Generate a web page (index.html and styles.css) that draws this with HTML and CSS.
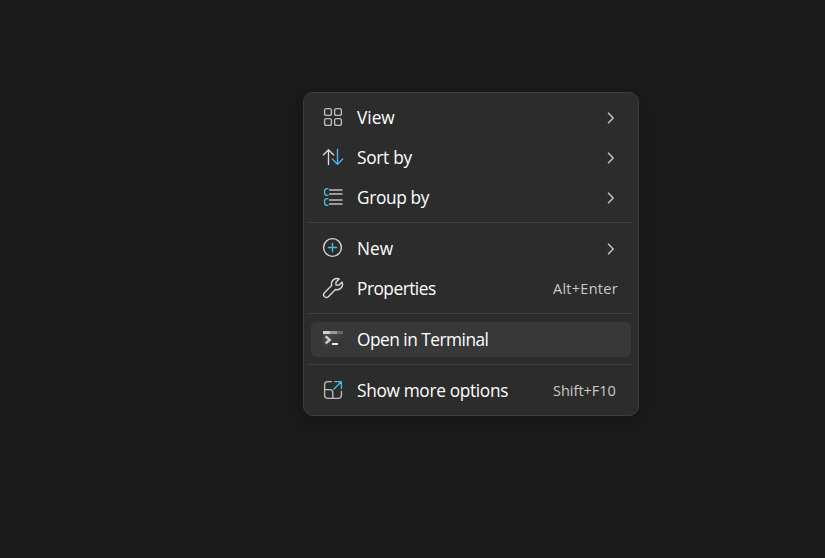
FILE: index.html
```
<!DOCTYPE html>
<html lang="en">
<head>
<meta charset="utf-8">
<title>Context menu</title>
<link rel="stylesheet" href="styles.css">
</head>
<body>
<div class="menu" role="menu">
  <div class="item" role="menuitem">
    <svg class="icon" viewBox="0 0 30 30"><g class="line dim"><rect x="6.6" y="6.6" width="6.8" height="6.8" rx="1.9"/><rect x="16.6" y="6.6" width="6.8" height="6.8" rx="1.9"/><rect x="6.6" y="16.6" width="6.8" height="6.8" rx="1.9"/><rect x="16.6" y="16.6" width="6.8" height="6.8" rx="1.9"/></g></svg>
    <span class="label view">View</span>
    <svg class="chevron" viewBox="0 0 10 14"><path d="M2 1.8 7.2 7 2 12.2"/></svg>
  </div>
  <div class="item" role="menuitem">
    <svg class="icon" viewBox="0 0 30 30"><path class="line" d="M10.5 22.5V7.7M5.3 12.9l5.2-5.2 5.2 5.2"/><path class="line blue" d="M19.5 7.3v15M14.3 17.1l5.2 5.2 5.2-5.2"/></svg>
    <span class="label sort">Sort by</span>
    <svg class="chevron" viewBox="0 0 10 14"><path d="M2 1.8 7.2 7 2 12.2"/></svg>
  </div>
  <div class="item" role="menuitem">
    <svg class="icon" viewBox="0 0 30 30"><path class="line dim" d="M11.5 8H24M11.5 12H24M11.5 18H24M11.5 22H24"/><path class="line blue" d="M9.9 6.6H9Q6.6 6.6 6.6 9v2Q6.6 13.4 9 13.4h.9M9.9 16.6H9Q6.6 16.6 6.6 19v2Q6.6 23.4 9 23.4h.9"/></svg>
    <span class="label group">Group by</span>
    <svg class="chevron" viewBox="0 0 10 14"><path d="M2 1.8 7.2 7 2 12.2"/></svg>
  </div>
  <div class="separator"></div>
  <div class="item" role="menuitem">
    <svg class="icon" viewBox="0 0 30 30"><circle class="line" cx="14.5" cy="14.5" r="8.9"/><path class="line blue" d="M14.5 10.3v8.4M10.3 14.5h8.4"/></svg>
    <span class="label new">New</span>
    <svg class="chevron" viewBox="0 0 10 14"><path d="M2 1.8 7.2 7 2 12.2"/></svg>
  </div>
  <div class="item" role="menuitem">
    <svg class="icon" viewBox="0 0 30 30"><path class="line" d="M21.2 6C17.1 4.4 12.4 7.7 13.7 12.5L6.4 19.7C3.9 22.3 7.6 26.3 10.3 23.7L17.5 16.5C22.2 17.7 25.8 13.1 24.1 9L20.8 12.2 18 12 17.9 9.3Z"/></svg>
    <span class="label properties">Properties</span>
    <span class="shortcut alt">Alt+Enter</span>
  </div>
  <div class="separator"></div>
  <div class="item active" role="menuitem">
    <svg class="icon" viewBox="0 0 30 30">
      <defs><linearGradient id="screen" x1="0" y1="0" x2="1" y2="1"><stop offset="0" stop-color="#4b4b4b"/><stop offset="1" stop-color="#303030"/></linearGradient></defs>
      <path fill="url(#screen)" d="M5 10h20v13H5z"/><path fill="#cecece" d="M5 7h7v3H5z"/><path fill="#9a9a9a" d="M12 7h7v3h-7z"/><path fill="#666" d="M19 7h6v3h-6z"/>
      <path fill="none" stroke="#d0d0d0" stroke-width="2.4" d="m7.7 12.4 4 3.5-4 3.5"/><path fill="#ededed" d="M14 19h6v2h-6z"/>
    </svg>
    <span class="label terminal">Open in Terminal</span>
  </div>
  <div class="separator"></div>
  <div class="item" role="menuitem">
    <svg class="icon" viewBox="0 0 30 30"><path class="line dim" d="M13.4 6.6H10Q6.6 6.6 6.6 10v10Q6.6 23.4 10 23.4h10Q23.4 23.4 23.4 20v-3.5M6.6 14.6h5.2Q14.8 14.6 14.8 17.6v5.8"/><path class="line blue" d="M16.5 6.6h6.9v6.9M23.2 6.8l-7.4 7.4"/></svg>
    <span class="label more">Show more options</span>
    <span class="shortcut shift">Shift+F10</span>
  </div>
</div>
</body>
</html>
```
FILE: styles.css
```
* { box-sizing: border-box; }

body {
  margin: 0;
  height: 558px;
  padding: 92px 0 0 303px;
  overflow: hidden;
  background: #1a1a1a;
  font-family: "Open Sans", "Noto Sans", sans-serif;
}

.menu {
  display: flex;
  flex-direction: column;
  width: 336px;
  height: 324px;
  padding: 4px 0 5px;
  border: 1px solid #3d3d3d;
  border-radius: 10px;
  background: #2c2c2c;
  box-shadow: 0 6px 12px rgba(0, 0, 0, .16);
}

.item {
  display: flex;
  flex: none;
  align-items: center;
  height: 40px;
  margin: 0 7px;
  padding: 0 0 0 7px;
}

.item.active {
  height: 35px;
  margin-top: 3px;
  margin-bottom: 2px;
  border-radius: 5px;
  background: #383838;
}

.separator {
  flex: none;
  height: 1px;
  margin: 5px 5px 5px 4px;
  background: #3e3e3e;
}

.icon { width: 30px; height: 30px; flex: none; }
.active .icon { margin-top: -1px; }

.line {
  fill: none;
  stroke: #dadada;
  stroke-width: 1.35;
  stroke-linecap: round;
  stroke-linejoin: round;
}
.dim { stroke: #bebebe; }
.blue { stroke: #4cb8ee; }

.label {
  flex: 1;
  margin-left: 9px;
  padding-top: 2px;
  color: #fff;
  font-size: 17.3px;
  line-height: 24px;
  white-space: nowrap;
}
.active .label { padding-top: 1px; }
.sort { letter-spacing: -.28px; }
.group { letter-spacing: -.36px; }
.properties { letter-spacing: -.5px; }
.terminal { letter-spacing: -.5px; }
.more { letter-spacing: -.33px; }

.chevron {
  width: 10px;
  height: 14px;
  margin: 1px 15px 0 0;
  fill: none;
  stroke: #cfcfcf;
  stroke-width: 1.3;
}

.shortcut {
  width: 78px;
  color: #c9c9c9;
  font-size: 14.5px;
  white-space: nowrap;
}
.alt { letter-spacing: .27px; }
```
